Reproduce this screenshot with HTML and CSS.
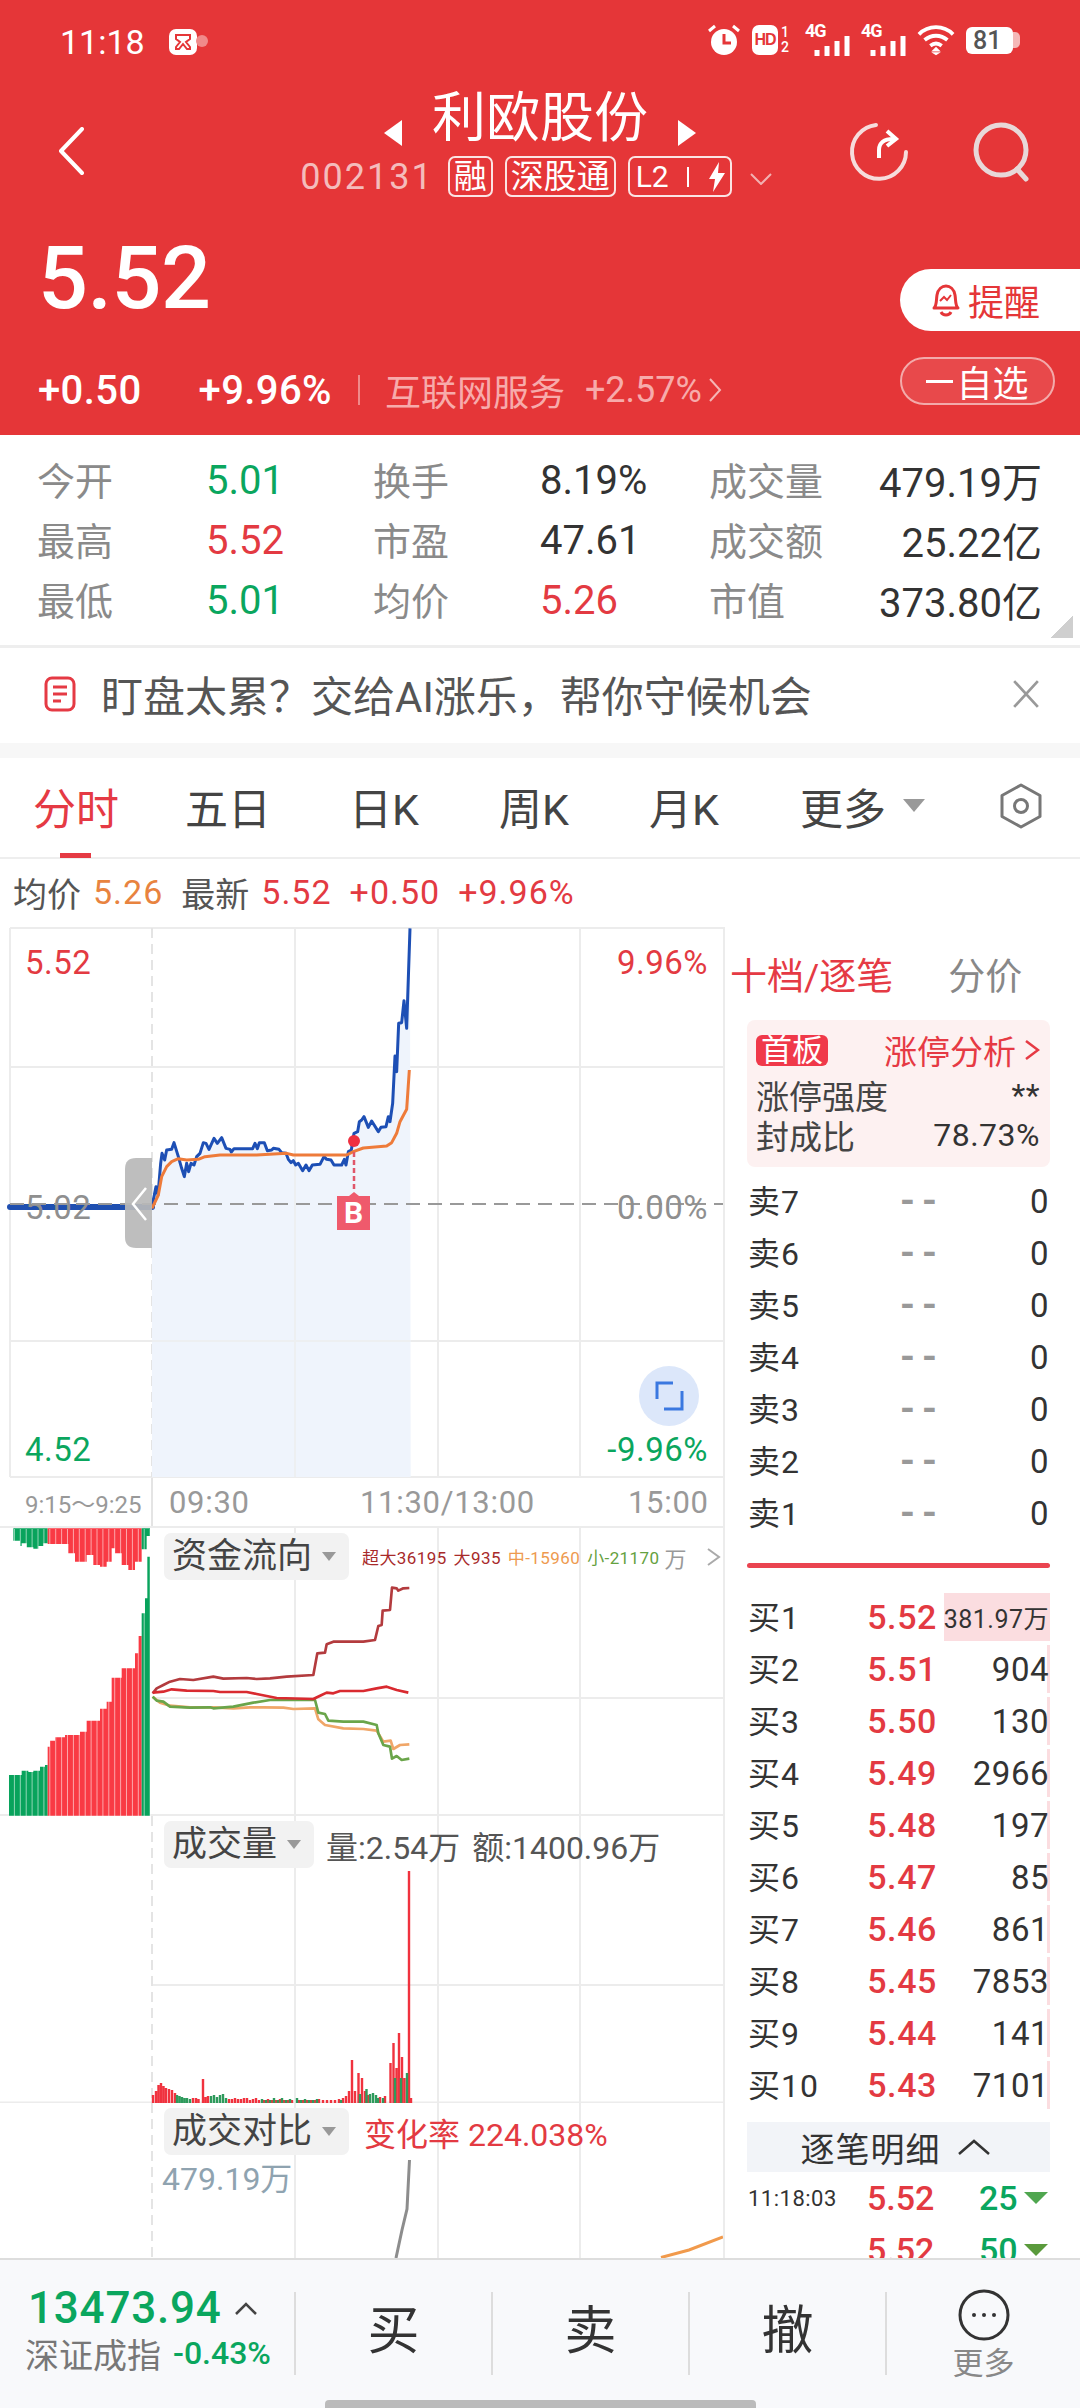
FILE: index.html
```html
<!DOCTYPE html>
<html lang="zh">
<head>
<meta charset="utf-8">
<title>利欧股份</title>
<link rel="stylesheet" href="styles.css">
</head>
<body>
<div class="app">
  <header class="header">
    <div class="status">
      <div class="status-left">
        <span class="clock">11:18</span>
        <svg class="app-ico" width="40" height="26" viewBox="0 0 40 26"><rect x="0" y="0" width="28" height="26" rx="7" fill="#fff"/><path d="M7 6h14v4l-4 3 4 5v2h-3l-4-5-4 5H7v-2l4-5-4-3z" fill="none" stroke="#e53638" stroke-width="2"/><circle cx="33" cy="12" r="6" fill="#f08a8a"/></svg>
      </div>
      <div class="status-right">
        <svg width="34" height="32" viewBox="0 0 34 32"><circle cx="17" cy="18" r="13" fill="#fff"/><path d="M17 10v9h7" fill="none" stroke="#e53638" stroke-width="3"/><path d="M2 7 8 2M32 7l-6-5" stroke="#fff" stroke-width="3" fill="none"/></svg>
        <span class="hd"><span class="hd-box">HD</span><span class="hd-sims"><i>1</i><i>2</i></span></span>
        <span class="net"><b>4G</b><svg width="36" height="20" viewBox="0 0 36 20"><path d="M3 14v6M13 10v10M23 5v15M33 0v20" stroke="#fff" stroke-width="5" fill="none"/></svg></span>
        <span class="net"><b>4G</b><svg width="36" height="20" viewBox="0 0 36 20"><path d="M3 14v6M13 10v10M23 5v15M33 0v20" stroke="#fff" stroke-width="5" fill="none"/></svg></span>
        <svg width="38" height="32" viewBox="0 0 40 32"><path d="M2 10C12 0 28 0 38 10M8 16c7-6 17-6 24 0M14 22c4-3 8-3 12 0" fill="none" stroke="#fff" stroke-width="4"/><path d="M20 23l5 5H15zM20 32l-5-3h10z" fill="#fff"/></svg>
        <span class="battery"><span class="battery-body">81</span><span class="battery-tip"></span></span>
      </div>
    </div>
    <div class="nav">
      <svg class="back" width="26" height="48" viewBox="0 0 26 48"><path d="M24 2 3 24l21 22" fill="none" stroke="#fff" stroke-width="4" stroke-linecap="round" stroke-linejoin="round"/></svg>
      <div class="nav-center">
        <div class="title-row">
          <svg width="18" height="26" viewBox="0 0 18 26"><path d="M18 0v26L0 13z" fill="#fff"/></svg>
          <h1 class="title">利欧股份</h1>
          <svg width="18" height="26" viewBox="0 0 18 26"><path d="M0 0v26l18-13z" fill="#fff"/></svg>
        </div>
        <div class="code-row">
          <span class="code">002131</span>
          <span class="tag">融</span>
          <span class="tag">深股通</span>
          <span class="tag tag-l2">L2<i class="tag-bar"></i><svg width="18" height="30" viewBox="0 0 18 30"><path d="M11 0 1 17h6L5 30 17 11h-7z" fill="#fff"/></svg></span>
          <svg class="code-caret" width="22" height="12" viewBox="0 0 22 12"><path d="M1 1l10 10L21 1" fill="none" stroke="#f2b1b1" stroke-width="2"/></svg>
        </div>
      </div>
      <div class="nav-actions">
        <svg width="60" height="60" viewBox="0 0 60 60"><path d="M27 3a27 27 0 1 0 30 27" fill="none" stroke="#f6dcdc" stroke-width="4" stroke-linecap="round"/><path d="M30 36v-8c0-7 5-11 14-11" fill="none" stroke="#fff" stroke-width="4"/><path d="M38 9l9 8-9 7" fill="none" stroke="#fff" stroke-width="4"/></svg>
        <svg width="60" height="60" viewBox="0 0 60 60"><circle cx="28" cy="28" r="25" fill="none" stroke="#e8d8d8" stroke-width="5"/><path d="M44 47l9 10" stroke="#e8d8d8" stroke-width="5" stroke-linecap="round"/></svg>
      </div>
    </div>
    <div class="quote">
      <div class="quote-left">
        <div class="price">5.52</div>
        <div class="change-row">
          <span class="chg chg-a">+0.50</span>
          <span class="chg chg-b">+9.96%</span>
          <i class="chg-line"></i>
          <span class="sector">互联网服务</span>
          <span class="sector-pct">+2.57%</span>
          <svg width="14" height="26" viewBox="0 0 14 26"><path d="M2 2l10 11L2 24" fill="none" stroke="#f5b5b5" stroke-width="2"/></svg>
        </div>
      </div>
      <div class="quote-right">
        <div class="remind">
          <svg width="32" height="34" viewBox="0 0 32 34"><path d="M4 25c3-3 2-7 3-13 1-6 5-9 9-9s8 3 9 9c1 6 0 10 3 13z" fill="none" stroke="#e53638" stroke-width="3" stroke-linejoin="round"/><path d="M11 29c2 4 8 4 10 0" fill="none" stroke="#e53638" stroke-width="3"/><path d="M10 18l4-4 3 3 4-5" fill="none" stroke="#e53638" stroke-width="2"/></svg>
          <span>提醒</span>
        </div>
        <div class="watch"><i class="watch-dash"></i>自选</div>
      </div>
    </div>
  </header>

  <section class="stats">
    <span class="stat-k">今开</span><span class="stat-v green">5.01</span>
    <span class="stat-k">换手</span><span class="stat-v">8.19%</span>
    <span class="stat-k">成交量</span><span class="stat-v end">479.19万</span>
    <span class="stat-k">最高</span><span class="stat-v red">5.52</span>
    <span class="stat-k">市盈</span><span class="stat-v">47.61</span>
    <span class="stat-k">成交额</span><span class="stat-v end">25.22亿</span>
    <span class="stat-k">最低</span><span class="stat-v green">5.01</span>
    <span class="stat-k">均价</span><span class="stat-v red">5.26</span>
    <span class="stat-k">市值</span><span class="stat-v end">373.80亿</span>
    <i class="corner"></i>
  </section>

  <section class="banner">
    <svg width="32" height="36" viewBox="0 0 32 36"><rect x="2" y="2" width="28" height="32" rx="6" fill="none" stroke="#e53a44" stroke-width="3"/><path d="M9 11h14M9 18h14M9 25h8" stroke="#e53a44" stroke-width="3"/></svg>
    <span class="banner-text">盯盘太累&#xFF1F;交给AI涨乐&#xFF0C;帮你守候机会</span>
    <svg class="banner-x" width="28" height="28" viewBox="0 0 26 26"><path d="M2 1l22 24M24 1 2 25" stroke="#999" stroke-width="2.500" fill="none"/></svg>
  </section>

  <nav class="tabs">
    <span class="tab tab-on">分时</span>
    <span class="tab tab-2">五日</span>
    <span class="tab tab-3">日K</span>
    <span class="tab tab-4">周K</span>
    <span class="tab tab-5">月K</span>
    <span class="tab tab-6">更多</span>
    <i class="tab-caret"></i>
    <svg class="tab-gear" width="44" height="46" viewBox="0 0 44 46"><path d="M22 2l19 10.500v21L22 44 3 33.500v-21z" fill="none" stroke="#777" stroke-width="3" stroke-linejoin="round"/><circle cx="22" cy="23" r="6.500" fill="none" stroke="#777" stroke-width="3"/></svg>
  </nav>

  <div class="subrow">
    <span>均价</span><span class="orange sub-num">5.26</span>
    <span class="sub-gap">最新</span><span class="red sub-num">5.52</span>
    <span class="red sub-num sub-gap2">+0.50</span><span class="red sub-num sub-gap2">+9.96%</span>
  </div>

  <main class="main">
    <div class="charts">
      <div class="panel panel-price">
        <svg class="panel-svg" width="723" height="551" viewBox="0 927 723 551">
          <path class="grid" d="M10 928H723M10 1067H723M10 1341H723M10 1477H723M10 928V1477M295 928V1477M438 928V1477M580 928V1477"/>
          <path class="grid-dash" d="M152 928V1477"/>
          <g transform="translate(130 920) scale(.33333)">
            <path fill="#eff4fc" d="M66 860L72 830 78 800 84 825 92 730 96 700 104 720 110 690 125 688 132 668 145 710 155 745 163 770 170 730 176 755 183 730 192 735 200 710 210 700 220 668 228 670 237 688 252 655 262 670 275 653 288 685 300 688 304 696 312 686 368 686 375 670 382 686 388 668 403 668 412 692 425 690 430 685 447 688 455 698 468 700 475 718 483 728 490 722 497 735 505 730 518 752 528 735 537 752 547 735 570 733 582 710 590 718 603 720 612 735 635 735 643 718 648 735 655 695 664 690 672 640 683 635 688 605 695 600 702 590 715 622 725 603 745 635 753 622 768 620 775 590 780 605 788 550 795 408 800 455 806 310 815 308 822 242 830 325 840 25 842 1671 66 1671Z"/>
          </g>
          <path class="grid" d="M152 1341H410M295 1100V1477" opacity=".7"/>
          <path d="M10 1207H152" stroke="#1f4fb0" stroke-width="6" fill="none" stroke-linecap="round"/>
          <text class="ct gray" x="25" y="1219">5.02</text>
          <path d="M10 1204H723" stroke="#999" stroke-width="2" stroke-dasharray="14 8" fill="none"/>
          <text class="ct gray" x="708" y="1219" text-anchor="end">0.00%</text>
          <text class="ct red" x="25" y="974">5.52</text>
          <text class="ct red" x="708" y="974" text-anchor="end">9.96%</text>
          <text class="ct green" x="25" y="1461">4.52</text>
          <text class="ct green" x="708" y="1461" text-anchor="end">-9.96%</text>
          <g transform="translate(130 920) scale(.33333)">
            <path fill="none" stroke="#1d4fb5" stroke-width="9" stroke-linejoin="round" d="M66 860L72 830 78 800 84 825 92 730 96 700 104 720 110 690 125 688 132 668 145 710 155 745 163 770 170 730 176 755 183 730 192 735 200 710 210 700 220 668 228 670 237 688 252 655 262 670 275 653 288 685 300 688 304 696 312 686 368 686 375 670 382 686 388 668 403 668 412 692 425 690 430 685 447 688 455 698 468 700 475 718 483 728 490 722 497 735 505 730 518 752 528 735 537 752 547 735 570 733 582 710 590 718 603 720 612 735 635 735 643 718 648 735 655 695 664 690 672 640 683 635 688 605 695 600 702 590 715 622 725 603 745 635 753 622 768 620 775 590 780 605 788 550 795 408 800 455 806 310 815 308 822 242 830 325 840 25"/>
            <path fill="none" stroke="#ee7b3a" stroke-width="9" stroke-linejoin="round" d="M66 865L85 825 95 770 110 740 125 725 145 716 170 720 205 718 225 710 270 705 380 705 470 700 490 705 650 705 670 695 700 684 770 678 785 668 800 640 810 605 830 568 838 450"/>
          </g>
          <path d="M354 1152V1192" stroke="#e0566a" stroke-width="2.500" stroke-dasharray="5 3" fill="none"/>
          <circle cx="354" cy="1141" r="6" fill="#ef3040"/>
          <path d="M337 1196H349L354 1192 359 1196H370V1230H337Z" fill="#ef5a6c"/>
          <text class="ct-b" x="353.500" y="1223" text-anchor="middle">B</text>
          <path d="M152 1158H136Q125 1158 125 1169V1237Q125 1248 136 1248H152Z" fill="#b9b9b9" fill-opacity=".92"/>
          <path d="M146 1188 133 1204 146 1220" fill="none" stroke="#fff" stroke-width="2.500"/>
          <circle cx="669" cy="1396" r="30" fill="#dce7fa"/>
          <path d="M673 1383H657V1399M664 1409H682V1391" fill="none" stroke="#3a78e0" stroke-width="3"/>
        </svg>
      </div>

      <div class="axis">
        <span class="axis-auction">9:15&#xFF5E;9:25</span>
        <span>09:30</span>
        <span>11:30/13:00</span>
        <span>15:00</span>
      </div>

      <div class="panel panel-fund">
        <svg class="panel-svg" width="723" height="288" viewBox="0 1528 723 288">
          <defs>
            <pattern id="barsep" x="9" y="0" width="5.900" height="10" patternUnits="userSpaceOnUse"><rect x="4.900" y="0" width="1" height="10" fill="#fff" fill-opacity=".55"/></pattern>
          </defs>
          <path class="grid" d="M152 1698H723M295 1528V1816M438 1528V1816M580 1528V1816M0 1815H723"/>
          <g transform="translate(0 1510) scale(.33333)">
            <path fill="#08a35c" d="M40 55H143V100H130V108H115V116H100V112H80V100H65V108H60V92H40Z"/>
            <path fill="#f93a44" d="M143 55H425V155H405V180H385V165H365V130H345V115H335V155H320V170H300V165H280V135H260V155H225V130H205V102H143Z"/>
            <path fill="#08a35c" d="M425 55H450V78H440V118H425Z"/>
            <path fill="#08a35c" d="M27 917V795H65V782H85V786H100V782H120V770H135V765H143V917Z"/>
            <path fill="#f93a44" d="M143 917V710H150V692H165V682H195V675H240V665H260V632H300V596H320V575H335V503H365V475H405V430H415V378H425V917Z"/>
            <path fill="#08a35c" d="M425 917V310H435V265H442V140H450V917Z"/>
          </g>
          <rect x="9" y="1529" width="142" height="287" fill="url(#barsep)"/>
          <g transform="translate(0 1510) scale(.33333)" fill="none" stroke-width="8" stroke-linejoin="round">
            <path stroke="#f0a668" d="M458 560 480 578 510 587 570 592 640 592 700 595 750 592 790 592 850 593 880 597 945 595 955 628 975 645 1030 655 1090 657 1130 662 1150 695 1172 692 1180 717 1200 705 1228 703"/>
            <path stroke="#6aa54a" d="M458 560 470 572 490 575 510 590 570 593 630 592 640 595 700 590 760 578 810 570 945 570 955 608 975 612 985 632 1030 635 1090 635 1130 645 1135 670 1150 705 1170 710 1176 746 1190 738 1205 750 1228 746"/>
            <path stroke="#b33b3e" d="M458 550 470 535 490 525 510 515 540 507 580 510 640 500 670 506 740 504 770 507 810 505 860 500 940 495 952 430 975 428 980 403 1000 395 1090 395 1125 390 1135 348 1145 345 1148 302 1170 300 1176 233 1190 235 1195 242 1210 235 1228 234"/>
            <path stroke="#d92a30" d="M458 548 490 545 515 538 560 542 640 543 660 546 740 546 770 552 830 564 940 567 965 555 980 548 1000 550 1020 543 1090 543 1130 535 1160 530 1190 540 1225 548"/>
          </g>
        </svg>
        <div class="legend">
          <span class="chip">资金流向<i class="chip-caret"></i></span>
          <span class="flow flow-a flow-first">超大36195</span>
          <span class="flow flow-a">大935</span>
          <span class="flow flow-b">中-15960</span>
          <span class="flow flow-c">小-21170</span>
          <span class="flow-unit">万</span>
          <svg class="flow-more" width="14" height="20" viewBox="0 0 14 20"><path d="M1 2l11 8-11 8" fill="none" stroke="#aaa" stroke-width="2"/></svg>
        </div>
      </div>

      <div class="panel panel-vol">
        <svg class="panel-svg" width="723" height="287" viewBox="0 1816 723 287">
          <path class="grid" d="M152 1985H723M295 1816V2103M438 1816V2103M580 1816V2103M0 2102.500H723"/>
          <path class="grid-dash" d="M152 1816V2103"/>
          <path fill="none" stroke="#f0323e" stroke-width="2.400" d="M153 2103v-8M156 2103v-12M158.500 2103v-18M161 2103v-20M163.500 2103v-17M166 2103v-15M169 2103v-14M172 2103v-13M175 2103v-10M193 2103v-5M196 2103v-5M198.500 2103v-4M203 2103v-24M205.500 2103v-6M208 2103v-7M229 2103v-4M232 2103v-4M235 2103v-5M238 2103v-4M241 2103v-4M244 2103v-5M247 2103v-5M250 2103v-3M253 2103v-4M256 2103v-5M259 2103v-3M264 2103v-3M268 2103v-4M272 2103v-3M276 2103v-3M280 2103v-4M284 2103v-3M288 2103v-3M292 2103v-3M299 2103v-3M303 2103v-3M307 2103v-3M311 2103v-3M315 2103v-3M319 2103v-4M323 2103v-3M327 2103v-3M331 2103v-3M335 2103v-3M339 2103v-4M343 2103v-5M346 2103v-7M349 2103v-12M352 2103v-43M355 2103v-12M358.500 2103v-30M362 2103v-25M365 2103v-12M368 2103v-8M380 2103v-6M385 2103v-7M390.500 2103v-40M393.500 2103v-60M396.500 2103v-35M399 2103v-70M402 2103v-46M404.500 2103v-25M409 2103v-232M411 2103v-5"/>
          <path fill="none" stroke="#2e9a5c" stroke-width="2.400" d="M177 2103v-8M179.500 2103v-7M182 2103v-6M184.500 2103v-5M187 2103v-5M190 2103v-4M211 2103v-7M214 2103v-8M217 2103v-6M220 2103v-8M223 2103v-9M226 2103v-5M262 2103v-4M266 2103v-3M270 2103v-3M274 2103v-5M278 2103v-3M282 2103v-5M286 2103v-3M290 2103v-4M297 2103v-5M301 2103v-3M305 2103v-4M309 2103v-3M313 2103v-3M317 2103v-4M341 2103v-3M360 2103v-9M366.500 2103v-14M370 2103v-9M373 2103v-10M376 2103v-8M378 2103v-5M383 2103v-5M395 2103v-25M401 2103v-25M407 2103v-30"/>
        </svg>
        <div class="legend">
          <span class="chip">成交量<i class="chip-caret"></i></span>
          <span class="vol-text">量:2.54万</span>
          <span class="vol-text">额:1400.96万</span>
        </div>
      </div>

      <div class="panel panel-cmp">
        <svg class="panel-svg" width="723" height="155" viewBox="0 2103 723 155">
          <path class="grid" d="M295 2103V2258M438 2103V2258M580 2103V2258"/>
          <path class="grid-dash" d="M152 2103V2258"/>
          <path d="M409.500 2160 407 2209 402 2230 396 2258" fill="none" stroke="#8d8d8d" stroke-width="3"/>
          <path d="M661 2257.500 689 2250 723 2237" fill="none" stroke="#f19a4c" stroke-width="3"/>
        </svg>
        <div class="legend">
          <span class="chip">成交对比<i class="chip-caret"></i></span>
          <span class="cmp-rate">变化率 224.038%</span>
        </div>
        <span class="cmp-total">479.19万</span>
      </div>
    </div>

    <aside class="book">
      <div class="book-tabs"><span class="book-tab-on">十档/逐笔</span><span class="book-tab">分价</span></div>
      <div class="limit">
        <div class="limit-row"><span class="limit-badge">首板</span><span class="limit-link">涨停分析 <svg width="16" height="24" viewBox="0 0 16 24"><path d="M2 3l12 9-12 9" fill="none" stroke="#e63a44" stroke-width="2.500"/></svg></span></div>
        <div class="limit-row"><span>涨停强度</span><span class="limit-val">**</span></div>
        <div class="limit-row"><span>封成比</span><span class="limit-val">78.73%</span></div>
      </div>
      <div class="rows">
        <div class="row"><span class="r-label">卖7</span><span class="r-none">--</span><span class="r-qty">0</span></div>
        <div class="row"><span class="r-label">卖6</span><span class="r-none">--</span><span class="r-qty">0</span></div>
        <div class="row"><span class="r-label">卖5</span><span class="r-none">--</span><span class="r-qty">0</span></div>
        <div class="row"><span class="r-label">卖4</span><span class="r-none">--</span><span class="r-qty">0</span></div>
        <div class="row"><span class="r-label">卖3</span><span class="r-none">--</span><span class="r-qty">0</span></div>
        <div class="row"><span class="r-label">卖2</span><span class="r-none">--</span><span class="r-qty">0</span></div>
        <div class="row"><span class="r-label">卖1</span><span class="r-none">--</span><span class="r-qty">0</span></div>
      </div>
      <div class="book-split"></div>
      <div class="rows rows-buy">
        <div class="row"><span class="r-label">买1</span><span class="r-price">5.52</span><span class="r-qty r-qty-big"><i class="r-bar r-bar-full"></i><em>381.97万</em></span></div>
        <div class="row"><span class="r-label">买2</span><span class="r-price">5.51</span><span class="r-qty"><i class="r-bar"></i><em>904</em></span></div>
        <div class="row"><span class="r-label">买3</span><span class="r-price">5.50</span><span class="r-qty"><i class="r-bar"></i><em>130</em></span></div>
        <div class="row"><span class="r-label">买4</span><span class="r-price">5.49</span><span class="r-qty"><i class="r-bar"></i><em>2966</em></span></div>
        <div class="row"><span class="r-label">买5</span><span class="r-price">5.48</span><span class="r-qty"><i class="r-bar"></i><em>197</em></span></div>
        <div class="row"><span class="r-label">买6</span><span class="r-price">5.47</span><span class="r-qty"><i class="r-bar"></i><em>85</em></span></div>
        <div class="row"><span class="r-label">买7</span><span class="r-price">5.46</span><span class="r-qty"><i class="r-bar"></i><em>861</em></span></div>
        <div class="row"><span class="r-label">买8</span><span class="r-price">5.45</span><span class="r-qty"><i class="r-bar"></i><em>7853</em></span></div>
        <div class="row"><span class="r-label">买9</span><span class="r-price">5.44</span><span class="r-qty"><i class="r-bar"></i><em>141</em></span></div>
        <div class="row"><span class="r-label">买10</span><span class="r-price">5.43</span><span class="r-qty"><i class="r-bar"></i><em>7101</em></span></div>
      </div>
      <div class="detail-head">逐笔明细<svg width="34" height="18" viewBox="0 0 34 18"><path d="M2 16 17 3l15 13" fill="none" stroke="#333" stroke-width="2.500"/></svg></div>
      <div class="tick"><span class="tick-time">11:18:03</span><span class="tick-price">5.52</span><span class="tick-qty">25</span><i class="tick-arrow"></i></div>
      <div class="tick"><span class="tick-time"></span><span class="tick-price">5.52</span><span class="tick-qty">50</span><i class="tick-arrow tick-arrow-dark"></i></div>
    </aside>
  </main>

  <footer class="foot">
    <div class="index">
      <div class="index-top"><span class="index-val">13473.94</span><svg width="24" height="13" viewBox="0 0 24 13"><path d="M2 12 12 2l10 10" fill="none" stroke="#444" stroke-width="2.500"/></svg></div>
      <div class="index-bot"><span class="index-name">深证成指</span><span class="index-pct">-0.43%</span></div>
    </div>
    <div class="act">买</div>
    <div class="act">卖</div>
    <div class="act">撤</div>
    <div class="more">
      <svg width="52" height="52" viewBox="0 0 52 52"><circle cx="26" cy="26" r="24" fill="none" stroke="#333" stroke-width="3"/><circle cx="16" cy="26" r="2" fill="#333"/><circle cx="26" cy="26" r="2" fill="#333"/><circle cx="36" cy="26" r="2" fill="#333"/></svg>
      <span>更多</span>
    </div>
    <i class="home"></i>
  </footer>
</div>
</body>
</html>
```
FILE: styles.css
```css
* { box-sizing: border-box; }
html, body { margin: 0; padding: 0; background: #fff; }
body { font-family: Roboto, "Noto Sans CJK SC", sans-serif; color: #333; }
i, em { font-style: normal; }
.app { width: 1080px; height: 2408px; display: flex; flex-direction: column; overflow: hidden; position: relative; }
.red { color: #e33a42; fill: #e33a42; }
.green { color: #0aa65e; fill: #0aa65e; }
.gray { fill: #8f8f8f; }
.orange { color: #e8833f; }

.header { height: 435px; flex: none; background: #e53638; color: #fff; }
.status { height: 80px; display: flex; justify-content: space-between; align-items: flex-start; padding: 24px 60px 0; }
.status-left { display: flex; align-items: center; gap: 24px; }
.clock { font-size: 34px; line-height: 36px; }
.status-right { display: flex; align-items: center; gap: 11px; }
.hd { display: flex; align-items: center; gap: 3px; width: 42px; }
.hd-box { width: 26px; height: 30px; background: #fff; border-radius: 7px; color: #e53638; font: 700 16px/30px "Liberation Sans", sans-serif; text-align: center; letter-spacing: -1px; }
.hd-sims { display: flex; flex-direction: column; font-size: 14px; line-height: 15px; font-weight: 500; }
.net { position: relative; width: 45px; height: 32px; display: block; }
.net b { position: absolute; left: 0; top: -2px; font-size: 18px; line-height: 18px; font-weight: 700; letter-spacing: -1px; }
.net svg { position: absolute; right: 0; bottom: 0; }
.battery { display: flex; align-items: center; }
.battery-body { width: 47px; height: 27px; background: #fff; border-radius: 6px; color: #555; font-size: 25px; line-height: 27px; font-weight: 500; padding-left: 7px; }
.battery-tip { width: 7px; height: 16px; background: #f5b8b8; border-radius: 0 5px 5px 0; }

.nav { height: 125px; display: grid; grid-template-columns: 1fr auto 1fr; padding-top: 7px; }
.back { margin: 40px 0 0 58px; }
.nav-center { display: flex; flex-direction: column; align-items: center; }
.title-row { height: 64px; display: flex; align-items: center; gap: 30px; }
.title-row svg { margin-top: 28px; }
.title { margin: 0; font-size: 54px; line-height: 64px; font-weight: 400; }
.code-row { display: flex; align-items: center; margin-top: 5px; height: 41px; gap: 12px; padding-right: 8px; }
.code { font-size: 36px; color: #f4bcbc; letter-spacing: 2px; margin-right: 2px; }
.tag { height: 41px; padding: 0 4px; border: 2px solid #fbe4e4; border-radius: 7px; font-size: 33px; line-height: 36px; color: #fff; display: flex; align-items: center; }
.tag-l2 { width: 104px; padding: 0 4px 0 6px; font-size: 30px; justify-content: space-between; }
.tag-bar { width: 2px; height: 20px; background: #fff; }
.code-caret { margin: 4px 0 0 6px; }
.nav-actions { display: flex; justify-content: flex-end; gap: 64px; padding: 35px 47px 0 0; align-items: flex-start; }

.quote { display: flex; justify-content: space-between; }
.quote-left { flex: 1; }
.price { margin: 29px 0 0 38px; font-size: 88px; line-height: 88px; font-weight: 500; letter-spacing: -.5px; }
.change-row { margin: 46px 0 0 38px; height: 44px; display: flex; align-items: center; white-space: nowrap; }
.chg { font-size: 40px; font-weight: 500; letter-spacing: .4px; }
.chg-b { margin-left: 57px; }
.chg-line { width: 2px; height: 30px; background: #f08a8a; margin: 0 25px 0 26px; }
.sector { font-size: 36px; color: #f7abab; }
.sector-pct { font-size: 36px; color: #f7abab; margin: 0 6px 0 20px; }
.quote-right { width: 180px; display: flex; flex-direction: column; padding-top: 64px; }
.remind { height: 62px; background: #fff; border-radius: 31px 0 0 31px; color: #e53638; font-size: 36px; display: flex; align-items: center; padding-left: 30px; gap: 6px; }
.watch { margin-top: 26px; width: 155px; height: 48px; border: 2px solid #f3aaaa; border-radius: 24px; background: #e8494b; font-size: 36px; display: flex; align-items: center; justify-content: center; gap: 3px; }
.watch-dash { width: 27px; height: 3px; background: #fff; }

.stats { position: relative; flex: none; height: 213px; padding: 15px 38px 0 37px; display: grid; grid-template-columns: 169px 167px 167px 169px 120px 213px; grid-auto-rows: 60px; align-items: center; border-bottom: 3px solid #eee; }
.stat-k { font-size: 38px; color: #8a8a8a; white-space: nowrap; margin-top: -4px; }
.stat-v { font-size: 40px; color: #333; white-space: nowrap; }
.stat-v.green { color: #0aa65e; }
.stat-v.red { color: #e33a42; }
.stat-v.end { text-align: right; }
.corner { position: absolute; right: 7px; bottom: 7px; width: 23px; height: 22px; background: linear-gradient(to bottom right, transparent 50%, #cfcfcf 50%); }

.banner { flex: none; height: 95px; display: flex; align-items: center; padding: 0 40px 4px 44px; }
.banner-text { font-size: 42px; color: #555; margin-left: 25px; white-space: nowrap; }
.banner-x { margin-left: auto; }

.tabs { position: relative; flex: none; height: 116px; border-top: 15px solid #f7f7f7; border-bottom: 2px solid #eee; display: flex; align-items: center; color: #444; padding-bottom: 4px; }
.tab { font-size: 43px; white-space: nowrap; }
.tab-on { margin-left: 33px; color: #e53a44; }
.tab-on::after { content: ""; position: absolute; left: 60px; bottom: -1px; width: 31px; height: 5px; background: #e53a44; }
.tab-2 { margin-left: 66px; }
.tab-3 { margin-left: 78px; }
.tab-4 { margin-left: 80px; }
.tab-5 { margin-left: 80px; }
.tab-6 { margin-left: 81px; }
.tab-caret { margin-left: 17px; width: 0; height: 0; border: 11px solid transparent; border-top: 13px solid #999; border-bottom: 0; }
.tab-gear { margin-left: 74px; }

.subrow { flex: none; height: 68px; display: flex; align-items: center; padding: 0 0 2px 13px; font-size: 34px; color: #555; gap: 12px; white-space: nowrap; }
.sub-num { letter-spacing: 1px; }
.sub-gap { margin-left: 6px; }
.sub-gap2 { margin-left: 6px; }

.main { flex: 1; min-height: 0; display: flex; overflow: hidden; }
.charts { width: 723px; flex: none; display: flex; flex-direction: column; }
.panel { position: relative; flex: none; }
.panel-price { height: 551px; }
.panel-fund { height: 288px; }
.panel-vol { height: 287px; }
.panel-cmp { height: 155px; }
.panel-svg { display: block; position: absolute; left: 0; top: 0; }
.grid { fill: none; stroke: #ececec; stroke-width: 2; }
.grid-dash { fill: none; stroke: #e4e4e4; stroke-width: 2; stroke-dasharray: 10 6; }
.ct { font-size: 33px; font-family: Roboto, sans-serif; letter-spacing: .5px; }
.ct-b { font-size: 30px; font-weight: 700; fill: #fff; font-family: Roboto, sans-serif; }

.axis { position: relative; flex: none; height: 50px; padding-left: 25px; display: grid; grid-template-columns: 144px 191px 268px auto; align-items: center; font-size: 31px; letter-spacing: .7px; color: #999; border-bottom: 2px solid #ececec; white-space: nowrap; }
.axis::before { content: ""; position: absolute; left: 151px; top: 0; bottom: 0; width: 2px; background: #e4e4e4; }
.axis-auction { font-size: 24px; letter-spacing: 0; }

.legend { position: absolute; left: 164px; top: 5px; display: flex; align-items: center; white-space: nowrap; }
.chip { height: 47px; padding: 0 13px 0 8px; background: #f2f2f2; border-radius: 7px; font-size: 35px; line-height: 47px; color: #444; display: flex; align-items: center; gap: 10px; }
.chip-caret { width: 0; height: 0; border: 7px solid transparent; border-top: 9px solid #999; border-bottom: 0; }
.flow { font-size: 17px; margin-left: 7px; letter-spacing: .4px; }
.flow-a { color: #a82a2a; }
.flow-first { margin-left: 13px; }
.flow-b { color: #ee9a4f; }
.flow-c { color: #65a140; }
.flow-unit { margin-left: 5px; font-size: 22px; color: #999; }
.flow-more { margin-left: 21px; }
.vol-text { font-size: 32px; color: #555; margin-left: 12px; }
.cmp-rate { font-size: 32px; color: #e33a42; margin-left: 15px; }
.cmp-total { position: absolute; left: 162px; top: 56px; font-size: 32px; line-height: 40px; color: #8fa3b0; }

.book { flex: 1; min-width: 0; border-left: 2px solid #ececec; padding: 0 30px 0 22px; }
.book-tabs { height: 93px; display: flex; align-items: center; margin-left: -17px; font-size: 37px; white-space: nowrap; }
.book-tab-on { color: #e53a44; }
.book-tab { color: #888; margin-left: 55px; }
.limit { height: 147px; background: #fdf1f1; border-radius: 8px; padding: 10px 10px 0 9px; font-size: 33px; color: #444; }
.limit-row { height: 40px; display: flex; justify-content: space-between; align-items: center; }
.limit-row:nth-child(2) { margin-top: 5px; }
.limit-badge { width: 72px; height: 31px; background: #f0394a; border-radius: 6px; color: #fff; font-size: 31px; line-height: 31px; text-align: center; }
.limit-link { color: #e63a44; display: flex; align-items: center; gap: 8px; }
.limit-val { font-size: 32px; color: #333; letter-spacing: .5px; }
.rows { margin-top: 8px; }
.rows-buy { margin-top: 23px; }
.row { height: 52px; display: grid; grid-template-columns: 1fr 70px 113px; align-items: center; font-size: 33px; }
.r-label { font-size: 32px; color: #333; letter-spacing: 1px; margin-top: -4px; padding-left: 1px; }
.r-none { text-align: right; color: #999; font-size: 38px; font-weight: 700; letter-spacing: 7px; margin-right: -7px; }
.r-price { text-align: right; color: #e33a42; font-size: 34px; font-weight: 500; letter-spacing: .6px; white-space: nowrap; }
.r-qty { position: relative; height: 100%; display: flex; align-items: center; justify-content: flex-end; padding-right: 1px; color: #333; letter-spacing: .5px; }
.r-qty em { position: relative; }
.r-bar { position: absolute; right: 0; top: 2px; bottom: 2px; width: 3px; background: #fbdde0; }
.r-bar-full { width: 106px; }
.r-qty-big { font-size: 25px; }
.book-split { margin-top: 24px; height: 5px; background: #ea4450; border-radius: 3px; }
.detail-head { margin-top: 11px; height: 50px; background: #f2f4f8; display: flex; align-items: center; justify-content: center; gap: 16px; font-size: 34px; color: #333; padding-right: 6px; letter-spacing: 1px; }
.tick { height: 52px; display: flex; align-items: center; position: relative; font-size: 33px; }
.tick-time { width: 89px; font-size: 22px; color: #333; letter-spacing: .5px; padding-left: 1px; }
.tick-price { margin-left: 31px; width: 66px; color: #e33a42; font-size: 34px; font-weight: 500; }
.tick-qty { margin-left: 46px; width: 37px; text-align: right; color: #0aa65e; font-size: 34px; font-weight: 500; }
.tick-arrow { margin-left: 8px; width: 0; height: 0; border: 12.500px solid transparent; border-top: 12px solid #4fa64f; border-bottom: 0; }
.tick-arrow-dark { border-top-color: #5a9a3c; }

.foot { position: relative; flex: none; height: 150px; background: #f8f9fb; border-top: 2px solid #ddd; padding-top: 32px; display: flex; align-items: flex-start; }
.index { width: 294px; height: 83px; padding-left: 25px; }
.index-top { margin-top: -7px; height: 46px; display: flex; align-items: center; gap: 12px; padding-left: 3px; }
.index-val { font-size: 44px; line-height: 46px; font-weight: 500; color: #0aa65e; letter-spacing: .8px; }
.index-bot { height: 44px; display: flex; align-items: center; gap: 12px; }
.index-name { font-size: 34px; color: #777; }
.index-pct { font-size: 32px; font-weight: 500; color: #0aa65e; }
.act { width: 197px; height: 83px; border-left: 2px solid #ddd; font-size: 52px; line-height: 80px; text-align: center; color: #333; }
.more { width: 195px; height: 83px; border-left: 2px solid #ddd; display: flex; flex-direction: column; align-items: center; }
.more svg { margin-top: -3px; flex: none; }
.more span { font-size: 31px; line-height: 36px; color: #888; margin-top: 5px; flex: none; }
.home { position: absolute; left: 325px; bottom: 0; width: 431px; height: 8px; background: #bbb; border-radius: 4px 4px 0 0; }
```
